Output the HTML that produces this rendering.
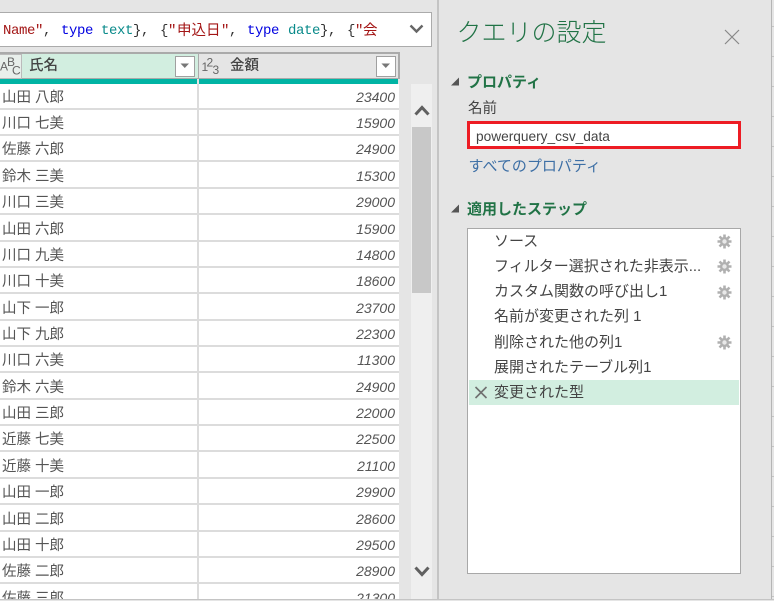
<!DOCTYPE html>
<html lang="ja"><head><meta charset="utf-8"><title>クエリの設定</title>
<style>
html,body{margin:0;padding:0}
body{width:774px;height:601px;position:relative;overflow:hidden;background:#e5e5e5;font-family:"Liberation Sans","Noto Sans CJK JP",sans-serif;color:#444}
div,span,svg{position:absolute;display:block}
.a{white-space:nowrap}
.fx span{top:2px;font:14px/32px "Liberation Mono","Noto Sans CJK JP",monospace;letter-spacing:-.4px;white-space:pre}
.fx span.c{font-size:14.5px;letter-spacing:0;top:3px}
.r{left:0;width:399px;height:24px;border-bottom:2px solid #dcdcdc;background:#fff}
.r:before{content:"";position:absolute;left:197px;top:-2px;bottom:-2px;width:2px;background:#dcdcdc}
.n{left:2px;top:4px;font-size:14.5px;line-height:20px;color:#555;white-space:pre}
.v{right:4px;top:3px;font:italic 14px/20px "Liberation Sans",sans-serif;color:#555}
.s{left:494px;font-size:15px;line-height:22px;color:#444;white-space:nowrap}
.g{left:717px;width:15px;height:15px}
</style></head><body>

<!-- formula bar -->
<div class="fx" style="left:-1px;top:12px;width:431px;height:33px;background:#fff;border:1px solid #ababab">
<span style="left:3px;color:#a31515">Name"</span>
<span style="left:43px;color:#333">,</span>
<span style="left:61px;color:#0000e0">type</span>
<span style="left:101px;color:#098a8a">text</span>
<span style="left:133px;color:#333">},</span>
<span style="left:160px;color:#333">{</span>
<span style="left:168px;color:#a31515">"</span>
<span class="c" style="left:177px;color:#a31515">申込日</span>
<span style="left:221px;color:#a31515">"</span>
<span style="left:229px;color:#333">,</span>
<span style="left:247px;color:#0000e0">type</span>
<span style="left:288px;color:#098a8a">date</span>
<span style="left:320px;color:#333">},</span>
<span style="left:347px;color:#333">{</span>
<span style="left:355px;color:#a31515">"</span>
<span class="c" style="left:363px;color:#a31515">会</span>
</div>
<svg style="left:409px;top:24px" width="15" height="10" viewBox="0 0 15 10"><path d="M1.5 1.5L7.5 7.5L13.5 1.5" fill="none" stroke="#666" stroke-width="2.4"/></svg>

<!-- table header -->
<div style="left:0;top:52px;width:400px;height:27px;background:#aaa"></div>
<div style="left:0;top:54px;width:198px;height:24px;background:#d2eee0"></div>
<div style="left:199px;top:54px;width:199px;height:24px;background:#e5e5e5"></div>
<div style="left:0;top:54px;width:21px;height:23px;background:#e8efeb;border:1px solid #bbb;border-left:0"></div>
<svg style="left:0;top:54px" width="24" height="26" viewBox="0 0 24 26"><text x="0" y="16.5" font-family="Liberation Sans" font-size="12" fill="#666">A</text><text x="7" y="12" font-family="Liberation Sans" font-size="12" fill="#666">B</text><text x="12" y="20.5" font-family="Liberation Sans" font-size="12" fill="#666">C</text></svg>
<div class="a" style="left:29px;top:56px;font-size:14.5px;line-height:21px;font-weight:500;color:#444">氏名</div>
<div style="left:175px;top:56px;width:18px;height:19px;background:#fff;border:1px solid #a0a0a0"></div>
<svg style="left:180px;top:63px" width="10" height="6"><path d="M0.5 0.5H9L4.8 5z" fill="#777"/></svg>
<svg style="left:201px;top:54px" width="26" height="26" viewBox="0 0 26 26"><text x="0.5" y="17" font-family="Liberation Sans" font-size="12" fill="#666">1</text><text x="5.5" y="12.5" font-family="Liberation Sans" font-size="12" fill="#666">2</text><text x="11.5" y="20" font-family="Liberation Sans" font-size="12" fill="#666">3</text></svg>
<div class="a" style="left:230px;top:56px;font-size:14.5px;line-height:21px;font-weight:500;color:#444">金額</div>
<div style="left:376px;top:56px;width:18px;height:19px;background:#fff;border:1px solid #a0a0a0"></div>
<svg style="left:381px;top:63px" width="10" height="6"><path d="M0.5 0.5H9L4.8 5z" fill="#777"/></svg>
<div style="left:0;top:79px;width:197px;height:5px;background:#01b4a4"></div>
<div style="left:199px;top:79px;width:199px;height:5px;background:#01b4a4"></div>

<!-- rows -->
<div style="left:0;top:84px;width:399px;height:515px;overflow:hidden;background:#fff">
<div class="r" style="top:0"><span class="n">山田 八郎</span><span class="v">23400</span></div>
<div class="r" style="top:26px"><span class="n">川口 七美</span><span class="v">15900</span></div>
<div class="r" style="top:52px"><span class="n">佐藤 六郎</span><span class="v">24900</span></div>
<div class="r" style="top:79px"><span class="n">鈴木 三美</span><span class="v">15300</span></div>
<div class="r" style="top:105px"><span class="n">川口 三美</span><span class="v">29000</span></div>
<div class="r" style="top:132px"><span class="n">山田 六郎</span><span class="v">15900</span></div>
<div class="r" style="top:158px"><span class="n">川口 九美</span><span class="v">14800</span></div>
<div class="r" style="top:184px"><span class="n">川口 十美</span><span class="v">18600</span></div>
<div class="r" style="top:211px"><span class="n">山下 一郎</span><span class="v">23700</span></div>
<div class="r" style="top:237px"><span class="n">山下 九郎</span><span class="v">22300</span></div>
<div class="r" style="top:263px"><span class="n">川口 六美</span><span class="v">11300</span></div>
<div class="r" style="top:290px"><span class="n">鈴木 六美</span><span class="v">24900</span></div>
<div class="r" style="top:316px"><span class="n">山田 三郎</span><span class="v">22000</span></div>
<div class="r" style="top:342px"><span class="n">近藤 七美</span><span class="v">22500</span></div>
<div class="r" style="top:369px"><span class="n">近藤 十美</span><span class="v">21100</span></div>
<div class="r" style="top:395px"><span class="n">山田 一郎</span><span class="v">29900</span></div>
<div class="r" style="top:422px"><span class="n">山田 二郎</span><span class="v">28600</span></div>
<div class="r" style="top:448px"><span class="n">山田 十郎</span><span class="v">29500</span></div>
<div class="r" style="top:474px"><span class="n">佐藤 二郎</span><span class="v">28900</span></div>
<div class="r" style="top:501px"><span class="n">佐藤 三郎</span><span class="v">21300</span></div>
</div>

<!-- scrollbar -->
<div style="left:411px;top:84px;width:21px;height:515px;background:#efefef"></div>
<div style="left:412px;top:127px;width:19px;height:166px;background:#c8c8c8"></div>
<svg style="left:414px;top:104px" width="16" height="13" viewBox="0 0 16 13"><path d="M1.5 10.5L8 3.5L14.5 10.5" fill="none" stroke="#606060" stroke-width="3"/></svg>
<svg style="left:414px;top:565px" width="16" height="13" viewBox="0 0 16 13"><path d="M1.5 2.5L8 9.5L14.5 2.5" fill="none" stroke="#606060" stroke-width="3"/></svg>
<div style="left:437px;top:0;width:2px;height:599px;background:#c4c4c4"></div>

<!-- settings panel -->
<div class="a" style="left:456.5px;top:15px;font-size:25px;line-height:37px;font-weight:300;color:#217346">クエリの設定</div>
<svg style="left:723px;top:28px" width="18" height="18" viewBox="0 0 18 18"><path d="M2 2L16 16M16 2L2 16" stroke="#888" stroke-width="1.2" fill="none"/></svg>
<svg style="left:451px;top:77px" width="8" height="9"><path d="M8 0.5V8.5H0z" fill="#555"/></svg>
<div class="a" style="left:467px;top:72px;font-size:15px;line-height:22px;font-weight:700;color:#217346">プロパティ</div>
<div class="a" style="left:468px;top:99px;font-size:14.5px;line-height:21px;color:#444">名前</div>
<div style="left:467px;top:121px;width:268px;height:22px;background:#fff;border:3px solid #ed1c24"></div>
<div class="a" style="left:476px;top:127px;font-size:13.7px;line-height:19px;color:#444">powerquery_csv_data</div>
<div class="a" style="left:468.5px;top:156px;font-size:15px;line-height:22px;color:#3d6fa5">すべてのプロパティ</div>
<svg style="left:451px;top:204px" width="8" height="9"><path d="M8 0.5V8.5H0z" fill="#555"/></svg>
<div class="a" style="left:467px;top:199px;font-size:15px;line-height:22px;font-weight:700;color:#217346">適用したステップ</div>

<div style="left:467px;top:228px;width:272px;height:344px;background:#fff;border:1px solid #a8a8a8"></div>
<div style="left:469px;top:380px;width:270px;height:25px;background:#d2eee0"></div>
<div class="s" style="top:231px">ソース</div>
<div class="s" style="top:256px">フィルター選択された非表示...</div>
<div class="s" style="top:281px">カスタム関数の呼び出し1</div>
<div class="s" style="top:306px">名前が変更された列 1</div>
<div class="s" style="top:332px">削除された他の列1</div>
<div class="s" style="top:357px">展開されたテーブル列1</div>
<div class="s" style="top:382px">変更された型</div>
<svg style="left:474px;top:386px" width="14" height="13" viewBox="0 0 14 13"><path d="M1.5 1L12.5 12M12.5 1L1.5 12" stroke="#707070" stroke-width="1.6" fill="none"/></svg>

<svg class="g" style="top:234px" viewBox="0 0 15 15"><g stroke="#b0b0b0" stroke-width="2.6"><path d="M7.5 0.5V14.5M0.5 7.5H14.5M2.5 2.5L12.5 12.5M12.5 2.5L2.5 12.5"/></g><circle cx="7.5" cy="7.5" r="4.6" fill="#b0b0b0"/><circle cx="7.5" cy="7.5" r="2.2" fill="#e8e8e8"/></svg>
<svg class="g" style="top:259px" viewBox="0 0 15 15"><g stroke="#b0b0b0" stroke-width="2.6"><path d="M7.5 0.5V14.5M0.5 7.5H14.5M2.5 2.5L12.5 12.5M12.5 2.5L2.5 12.5"/></g><circle cx="7.5" cy="7.5" r="4.6" fill="#b0b0b0"/><circle cx="7.5" cy="7.5" r="2.2" fill="#e8e8e8"/></svg>
<svg class="g" style="top:285px" viewBox="0 0 15 15"><g stroke="#b0b0b0" stroke-width="2.6"><path d="M7.5 0.5V14.5M0.5 7.5H14.5M2.5 2.5L12.5 12.5M12.5 2.5L2.5 12.5"/></g><circle cx="7.5" cy="7.5" r="4.6" fill="#b0b0b0"/><circle cx="7.5" cy="7.5" r="2.2" fill="#e8e8e8"/></svg>
<svg class="g" style="top:335px" viewBox="0 0 15 15"><g stroke="#b0b0b0" stroke-width="2.6"><path d="M7.5 0.5V14.5M0.5 7.5H14.5M2.5 2.5L12.5 12.5M12.5 2.5L2.5 12.5"/></g><circle cx="7.5" cy="7.5" r="4.6" fill="#b0b0b0"/><circle cx="7.5" cy="7.5" r="2.2" fill="#e8e8e8"/></svg>

<!-- right edge -->
<div style="left:771px;top:0;width:1px;height:599px;background:#b5b5b5"></div>
<div style="left:772px;top:26px;width:2px;height:1px;background:#c4c4c4"></div>
<div style="left:772px;top:56px;width:2px;height:1px;background:#c4c4c4"></div>
<div style="left:772px;top:86px;width:2px;height:1px;background:#c4c4c4"></div>
<div style="left:772px;top:116px;width:2px;height:1px;background:#c4c4c4"></div>
<div style="left:772px;top:146px;width:2px;height:1px;background:#c4c4c4"></div>
<div style="left:772px;top:176px;width:2px;height:1px;background:#c4c4c4"></div>
<div style="left:772px;top:206px;width:2px;height:1px;background:#c4c4c4"></div>
<div style="left:772px;top:236px;width:2px;height:1px;background:#c4c4c4"></div>
<div style="left:772px;top:266px;width:2px;height:1px;background:#c4c4c4"></div>
<div style="left:772px;top:296px;width:2px;height:1px;background:#c4c4c4"></div>
<div style="left:772px;top:326px;width:2px;height:1px;background:#c4c4c4"></div>
<div style="left:772px;top:356px;width:2px;height:1px;background:#c4c4c4"></div>
<div style="left:772px;top:386px;width:2px;height:1px;background:#c4c4c4"></div>
<div style="left:772px;top:416px;width:2px;height:1px;background:#c4c4c4"></div>
<div style="left:772px;top:446px;width:2px;height:1px;background:#c4c4c4"></div>
<div style="left:772px;top:476px;width:2px;height:1px;background:#c4c4c4"></div>
<div style="left:772px;top:506px;width:2px;height:1px;background:#c4c4c4"></div>
<div style="left:772px;top:536px;width:2px;height:1px;background:#c4c4c4"></div>
<div style="left:772px;top:566px;width:2px;height:1px;background:#c4c4c4"></div>
<div style="left:772px;top:596px;width:2px;height:1px;background:#c4c4c4"></div>
<div style="left:0;top:599px;width:774px;height:1px;background:#c4c4c4"></div>
</body></html>
